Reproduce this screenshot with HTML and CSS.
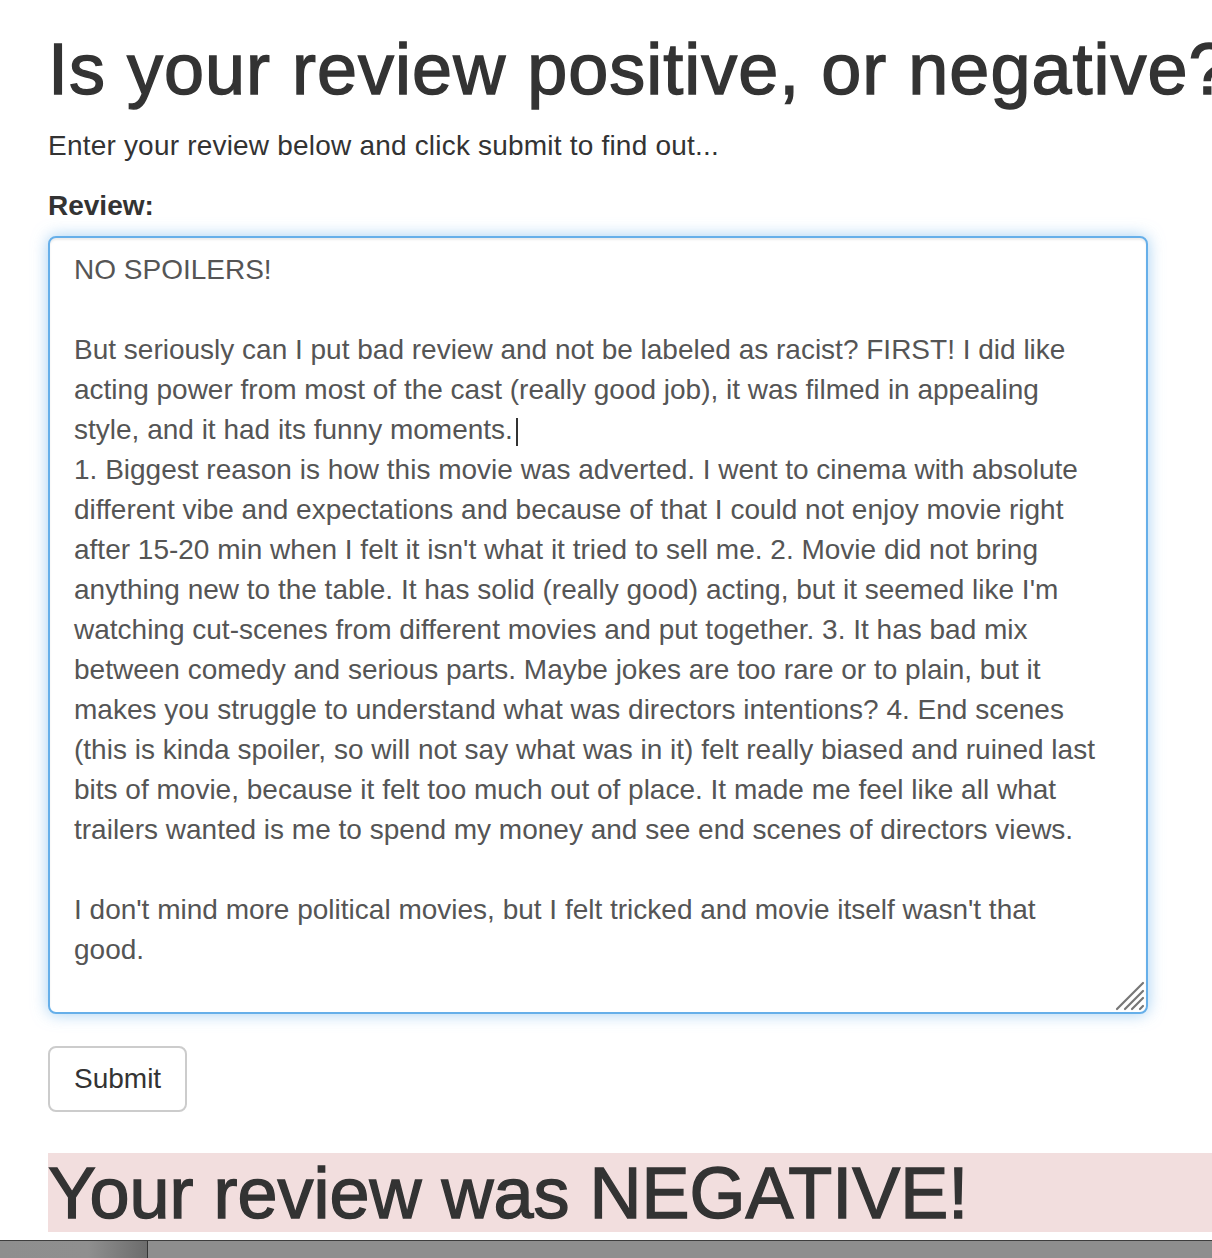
FILE: index.html
```html
<!DOCTYPE html>
<html lang="en">
<head>
<meta charset="utf-8">
<title>Sentiment Analysis</title>
<link rel="stylesheet" href="styles.css">
</head>
<body>
<div class="page">
  <h1 class="title">Is your review positive, or negative?</h1>
  <p class="lead-text">Enter your review below and click submit to find out...</p>
  <form class="review-form">
    <div class="form-group">
      <label class="field-label" for="review">Review:</label>
      <div class="textarea-wrap">
        <textarea id="review" class="review-input is-focused">NO SPOILERS!

But seriously can I put bad review and not be labeled as racist? FIRST! I did like acting power from most of the cast (really good job), it was filmed in appealing style, and it had its funny moments.
1. Biggest reason is how this movie was adverted. I went to cinema with absolute different vibe and expectations and because of that I could not enjoy movie right after 15-20 min when I felt it isn't what it tried to sell me. 2. Movie did not bring anything new to the table. It has solid (really good) acting, but it seemed like I'm watching cut-scenes from different movies and put together. 3. It has bad mix between comedy and serious parts. Maybe jokes are too rare or to plain, but it makes you struggle to understand what was directors intentions? 4. End scenes (this is kinda spoiler, so will not say what was in it) felt really biased and ruined last bits of movie, because it felt too much out of place. It made me feel like all what trailers wanted is me to spend my money and see end scenes of directors views.

I don't mind more political movies, but I felt tricked and movie itself wasn't that good.</textarea>
        <span class="text-caret" aria-hidden="true"></span>
        <svg class="resize-grip" width="30" height="30" viewBox="0 0 30 30" aria-hidden="true">
          <path d="M2 28 L28 2 M10 28 L28 10 M17 28 L28 17 M25 28 L28 25" stroke="#777" stroke-width="2.2" stroke-linecap="round" fill="none"/>
        </svg>
      </div>
    </div>
    <button type="button" class="btn-submit">Submit</button>
  </form>
  <h1 class="result result-negative">Your review was NEGATIVE!</h1>
</div>
<div class="bottom-bar">
  <div class="bottom-bar-left"></div>
</div>
</body>
</html>
```
FILE: styles.css
```css
html, body {
  margin: 0;
  padding: 0;
  background: #fff;
  overflow: hidden;
}

body {
  font-family: "Liberation Sans", Arial, Helvetica, sans-serif;
  color: #333;
  font-size: 28px;
  line-height: 40px;
}

.page {
  padding-left: 48px;
  overflow: hidden;
}

.title {
  margin: 30px 0 17px;
  font-size: 72px;
  line-height: 1.1;
  font-weight: 400;
  letter-spacing: 1px;
  -webkit-text-stroke: 1.4px #333;
  white-space: nowrap;
}

.lead-text {
  margin: 0 0 20px;
  letter-spacing: 0.2px;
}

.review-form {
  margin: 0;
}

.form-group {
  margin-bottom: 32px;
}

.field-label {
  display: block;
  font-weight: 700;
  margin-bottom: 10px;
}

.textarea-wrap {
  position: relative;
  width: 1100px;
}

.review-input {
  display: block;
  box-sizing: border-box;
  width: 1100px;
  height: 778px;
  padding: 12px 42px 12px 24px;
  border: 2px solid #ccc;
  border-radius: 8px;
  font-family: inherit;
  font-size: 28px;
  line-height: 40px;
  color: #555;
  background: #fff;
  outline: none;
  resize: none;
}

.review-input.is-focused {
  border-color: #66afe9;
  box-shadow: inset 0 2px 2px rgba(0, 0, 0, 0.075), 0 0 16px rgba(102, 175, 233, 0.6);
}

.text-caret {
  position: absolute;
  left: 468px;
  top: 182px;
  width: 2px;
  height: 28px;
  background: #333;
  pointer-events: none;
}

.resize-grip {
  position: absolute;
  right: 3px;
  bottom: 3px;
  pointer-events: none;
}

.btn-submit {
  display: block;
  box-sizing: border-box;
  height: 66px;
  padding: 0 24px;
  border: 2px solid #ccc;
  border-radius: 8px;
  background: #fff;
  color: #333;
  font-family: inherit;
  font-size: 28px;
  line-height: 40px;
}

.result {
  margin: 41px 0 0;
  padding-top: 2px;
  height: 79px;
  box-sizing: border-box;
  font-size: 72px;
  line-height: 77px;
  font-weight: 400;
  -webkit-text-stroke: 1.4px #333;
  white-space: nowrap;
}

.result-negative {
  background: #f2dede;
}

.bottom-bar {
  margin-top: 8px;
  height: 18px;
  box-sizing: border-box;
  border-top: 1px solid #3e3e3e;
  background: #8e8e8e;
  display: flex;
}

.bottom-bar-left {
  width: 148px;
  box-sizing: border-box;
  border-right: 1px solid #333;
  background: linear-gradient(to right, #8e8e8e 0%, #8f8f8f 60%, #6c6c6c 100%);
}
```
